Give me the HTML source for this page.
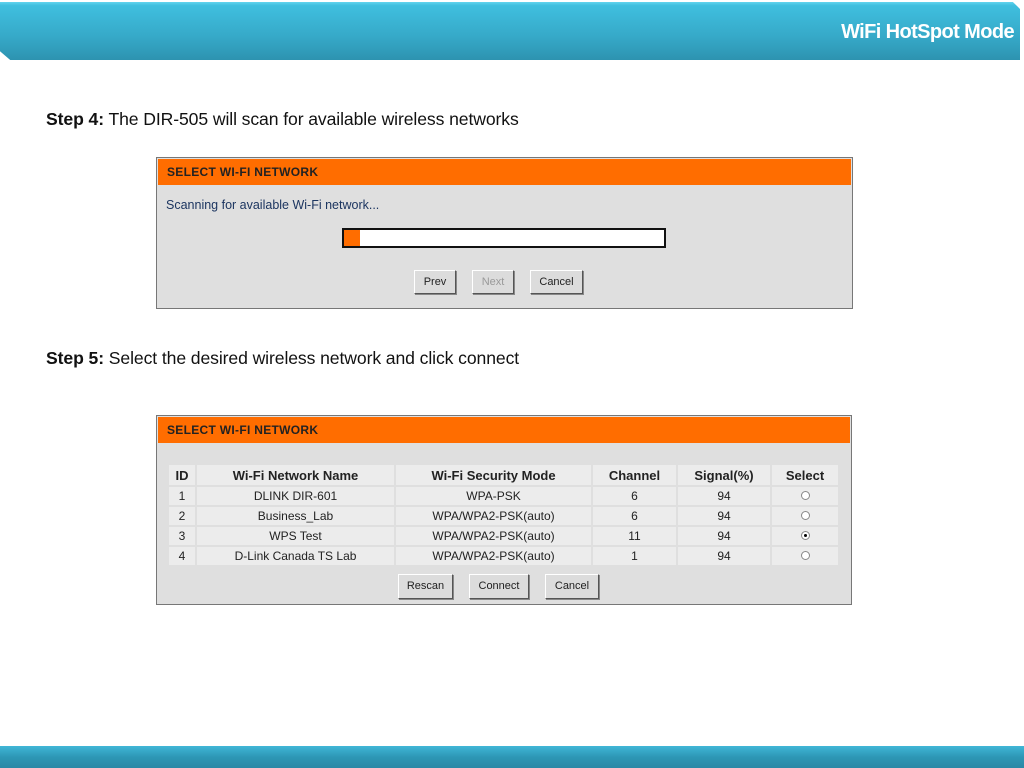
<!DOCTYPE html>
<html><head><meta charset="utf-8"><style>
*{margin:0;padding:0;box-sizing:border-box}
body{width:1024px;height:768px;position:relative;background:#fff;font-family:"Liberation Sans",sans-serif;overflow:hidden}
.a{position:absolute}
.hdr{left:0;top:2px;width:1020px;height:58px;background:linear-gradient(#62d4ee 0,#3fbfdf 6%,#36a9c8 60%,#2d93b0 100%);clip-path:polygon(0 0,99.3% 0,100% 12%,100% 100%,1% 100%,0 85%);box-shadow:0 2px 3px #999}
.title{right:10px;top:21px;color:#fff;font-weight:bold;font-size:20px;letter-spacing:-0.6px}
.foot{left:0;top:746px;width:1024px;height:22px;background:linear-gradient(#40b6d6,#2d97b5 50%,#2a88a5)}
.step{left:46px;font-size:17.6px;color:#111;letter-spacing:-0.1px}
.panel{background:#dfdfdf;border:1px solid #777}
.oh{background:#ff6d00;position:absolute;left:1px;right:1px;top:1px;height:26px;color:#222;font-weight:bold;font-size:12px;padding:6px 0 0 9px;letter-spacing:.3px}
.btn{position:absolute;background:#dcdcdc;border:1px solid;border-color:#fff #555 #555 #fff;box-shadow:1px 1px 0 #888;font-size:11px;text-align:center;color:#222}
table{position:absolute;border-collapse:separate;border-spacing:2px;font-size:12px;color:#222}
td{background:#ececec;text-align:center;height:18px;padding:0}
th{background:#ececec;height:20px;font-size:13px;color:#222}
.r{display:inline-block;width:9px;height:9px;border-radius:50%;border:1px solid #888;background:#fff;position:relative}
.r.s::after{content:"";position:absolute;left:2px;top:2px;width:3px;height:3px;border-radius:50%;background:#000}
</style></head><body>
<div class="a hdr"></div>
<div class="a title">WiFi HotSpot Mode</div>
<div class="a step" style="top:109px"><b>Step 4:</b> The DIR-505 will scan for available wireless networks</div>
<div class="a panel" style="left:156px;top:157px;width:697px;height:152px">
<div class="oh">SELECT WI-FI NETWORK</div>
<div class="a" style="left:9px;top:40px;font-size:12.5px;color:#1c3560">Scanning for available Wi-Fi network...</div>
<div class="a" style="left:185px;top:70px;width:324px;height:20px;border:2px solid #111;background:#fff"><div style="width:16px;height:100%;background:#ff6d00"></div></div>
<div class="btn" style="left:257px;top:112px;width:42px;height:24px;line-height:22px">Prev</div>
<div class="btn" style="left:315px;top:112px;width:42px;height:24px;line-height:22px;color:#999">Next</div>
<div class="btn" style="left:373px;top:112px;width:53px;height:24px;line-height:22px">Cancel</div>
</div>
<div class="a step" style="top:348px"><b>Step 5:</b> Select the desired wireless network and click connect</div>
<div class="a panel" style="left:156px;top:415px;width:696px;height:190px">
<div class="oh">SELECT WI-FI NETWORK</div>
<table style="left:10px;top:47px">
<tr><th style="width:26px">ID</th><th style="width:197px">Wi-Fi Network Name</th><th style="width:195px">Wi-Fi Security Mode</th><th style="width:83px">Channel</th><th style="width:92px">Signal(%)</th><th style="width:66px">Select</th></tr>
<tr><td>1</td><td>DLINK DIR-601</td><td>WPA-PSK</td><td>6</td><td>94</td><td><span class="r"></span></td></tr>
<tr><td>2</td><td>Business_Lab</td><td>WPA/WPA2-PSK(auto)</td><td>6</td><td>94</td><td><span class="r"></span></td></tr>
<tr><td>3</td><td>WPS Test</td><td>WPA/WPA2-PSK(auto)</td><td>11</td><td>94</td><td><span class="r s"></span></td></tr>
<tr><td>4</td><td>D-Link Canada TS Lab</td><td>WPA/WPA2-PSK(auto)</td><td>1</td><td>94</td><td><span class="r"></span></td></tr>
</table>
<div class="btn" style="left:241px;top:158px;width:55px;height:25px;line-height:23px">Rescan</div>
<div class="btn" style="left:312px;top:158px;width:60px;height:25px;line-height:23px">Connect</div>
<div class="btn" style="left:388px;top:158px;width:54px;height:25px;line-height:23px">Cancel</div>
</div>
<div class="a foot"></div>
</body></html>
